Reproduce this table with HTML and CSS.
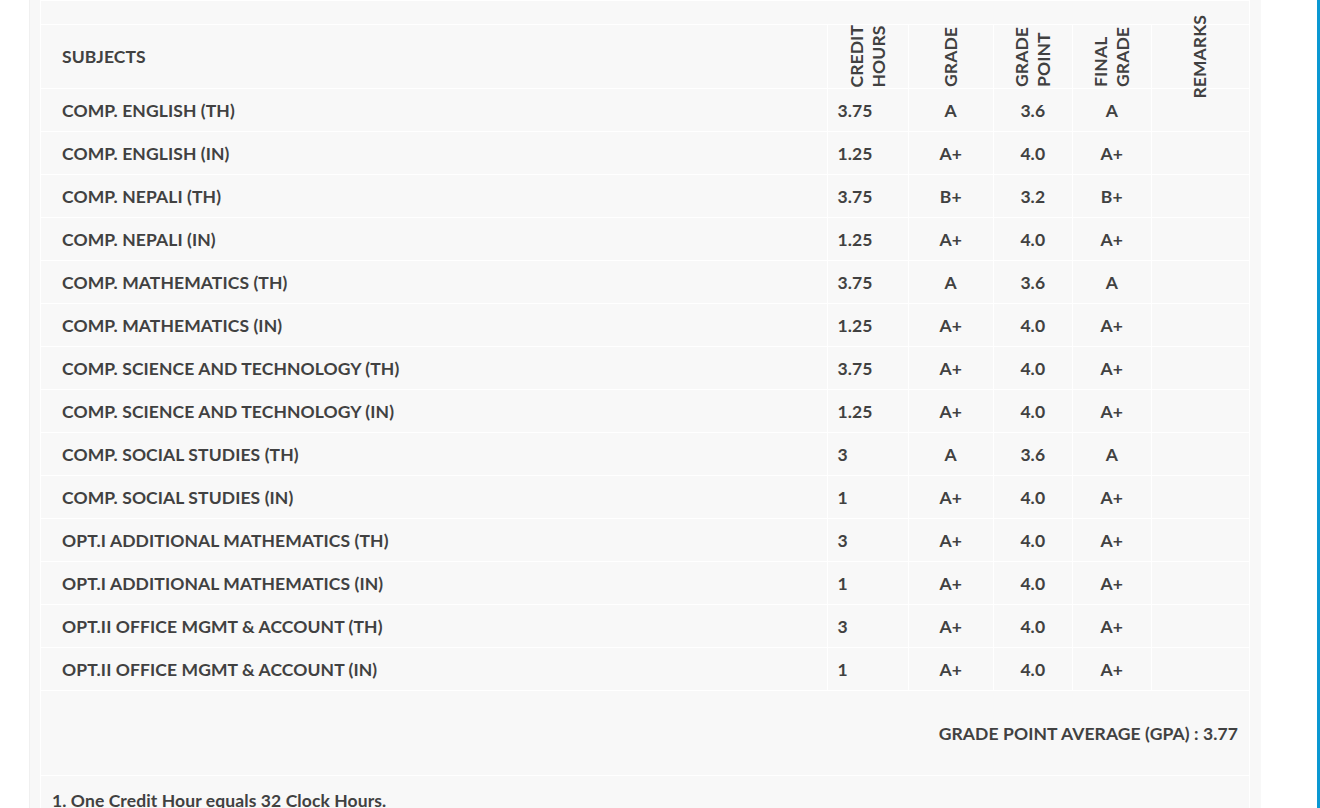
FILE: index.html
```html
<!DOCTYPE html>
<html>
<head>
<meta charset="utf-8">
<link rel="stylesheet" href="styles.css">
</head>
<body>
<div class="page">
  <div class="panel">
    <table class="marks">
      <colgroup>
        <col class="col-subj">
        <col class="col-ch">
        <col class="col-gr">
        <col class="col-gp">
        <col class="col-fg">
        <col class="col-rm">
      </colgroup>
      <tr class="top-row"><td colspan="6"></td></tr>
      <tr class="head">
        <th class="subj">SUBJECTS</th>
        <th><div class="vbox"><span class="vtext">CREDIT<br>HOURS</span></div></th>
        <th><div class="vbox"><span class="vtext">GRADE</span></div></th>
        <th><div class="vbox"><span class="vtext">GRADE<br>POINT</span></div></th>
        <th><div class="vbox"><span class="vtext">FINAL<br>GRADE</span></div></th>
        <th><div class="vbox"><span class="vtext">REMARKS</span></div></th>
      </tr>
      <tr><td class="subj">COMP. ENGLISH (TH)</td><td class="ch">3.75</td><td class="c">A</td><td class="c">3.6</td><td class="c">A</td><td></td></tr>
      <tr><td class="subj">COMP. ENGLISH (IN)</td><td class="ch">1.25</td><td class="c">A+</td><td class="c">4.0</td><td class="c">A+</td><td></td></tr>
      <tr><td class="subj">COMP. NEPALI (TH)</td><td class="ch">3.75</td><td class="c">B+</td><td class="c">3.2</td><td class="c">B+</td><td></td></tr>
      <tr><td class="subj">COMP. NEPALI (IN)</td><td class="ch">1.25</td><td class="c">A+</td><td class="c">4.0</td><td class="c">A+</td><td></td></tr>
      <tr><td class="subj">COMP. MATHEMATICS (TH)</td><td class="ch">3.75</td><td class="c">A</td><td class="c">3.6</td><td class="c">A</td><td></td></tr>
      <tr><td class="subj">COMP. MATHEMATICS (IN)</td><td class="ch">1.25</td><td class="c">A+</td><td class="c">4.0</td><td class="c">A+</td><td></td></tr>
      <tr><td class="subj">COMP. SCIENCE AND TECHNOLOGY (TH)</td><td class="ch">3.75</td><td class="c">A+</td><td class="c">4.0</td><td class="c">A+</td><td></td></tr>
      <tr><td class="subj">COMP. SCIENCE AND TECHNOLOGY (IN)</td><td class="ch">1.25</td><td class="c">A+</td><td class="c">4.0</td><td class="c">A+</td><td></td></tr>
      <tr><td class="subj">COMP. SOCIAL STUDIES (TH)</td><td class="ch">3</td><td class="c">A</td><td class="c">3.6</td><td class="c">A</td><td></td></tr>
      <tr><td class="subj">COMP. SOCIAL STUDIES (IN)</td><td class="ch">1</td><td class="c">A+</td><td class="c">4.0</td><td class="c">A+</td><td></td></tr>
      <tr><td class="subj">OPT.I ADDITIONAL MATHEMATICS (TH)</td><td class="ch">3</td><td class="c">A+</td><td class="c">4.0</td><td class="c">A+</td><td></td></tr>
      <tr><td class="subj">OPT.I ADDITIONAL MATHEMATICS (IN)</td><td class="ch">1</td><td class="c">A+</td><td class="c">4.0</td><td class="c">A+</td><td></td></tr>
      <tr><td class="subj">OPT.II OFFICE MGMT &amp; ACCOUNT (TH)</td><td class="ch">3</td><td class="c">A+</td><td class="c">4.0</td><td class="c">A+</td><td></td></tr>
      <tr><td class="subj">OPT.II OFFICE MGMT &amp; ACCOUNT (IN)</td><td class="ch">1</td><td class="c">A+</td><td class="c">4.0</td><td class="c">A+</td><td></td></tr>
      <tr class="gpa-row"><td colspan="6" class="gpa">GRADE POINT AVERAGE (GPA) : 3.77</td></tr>
      <tr class="notes-row"><td colspan="6" class="notes">1. One Credit Hour equals 32 Clock Hours.</td></tr>
    </table>
  </div>
</div>
</body>
</html>
```

FILE: styles.css
```css
html, body {
  margin: 0;
  padding: 0;
  background: #ffffff;
}
body {
  font-family: "Lato", "Liberation Sans", sans-serif;
  font-weight: 700;
  font-size: 17.5px;
  letter-spacing: 0.1px;
  color: #414141;
  overflow: hidden;
}
.page {
  width: 1317px;
  height: 808px;
  border-right: 3px solid #0a98d2;
  overflow: hidden;
}
.panel {
  margin-left: 29px;
  width: 1210px;
  padding: 0 11px 0 10px;
  border-left: 1px solid #f0f0f0;
  background: #f8f8f8;
  height: 808px;
}
.marks {
  width: 1210px;
  border-collapse: collapse;
  table-layout: fixed;
  border: 1px solid #ffffff;
  background: #f8f8f8;
}
.col-subj { width: 786px; }
.col-ch { width: 81px; }
.col-gr { width: 85px; }
.col-gp { width: 79px; }
.col-fg { width: 79px; }
.col-rm { width: 98px; }
.marks td, .marks th {
  border: 1px solid #ffffff;
  padding: 0;
  height: 42px;
  vertical-align: middle;
  text-align: left;
  font-weight: 700;
  white-space: nowrap;
}
.top-row td {
  height: 23px;
}
.head th {
  height: 63px;
}
.marks th.subj, .marks td.subj {
  padding-left: 21px;
}
.vbox {
  height: 63px;
  display: flex;
  align-items: center;
  justify-content: center;
}
.vtext {
  writing-mode: vertical-rl;
  transform: rotate(180deg);
  line-height: 22px;
  white-space: nowrap;
}
.marks td.ch {
  padding-left: 10px;
}
.marks td.c {
  text-align: center;
}
.gpa-row td {
  height: 84px;
  text-align: right;
  padding-right: 11px;
}
.notes-row td {
  height: 40px;
  padding: 14px 0 0 11px;
  vertical-align: top;
}
```
